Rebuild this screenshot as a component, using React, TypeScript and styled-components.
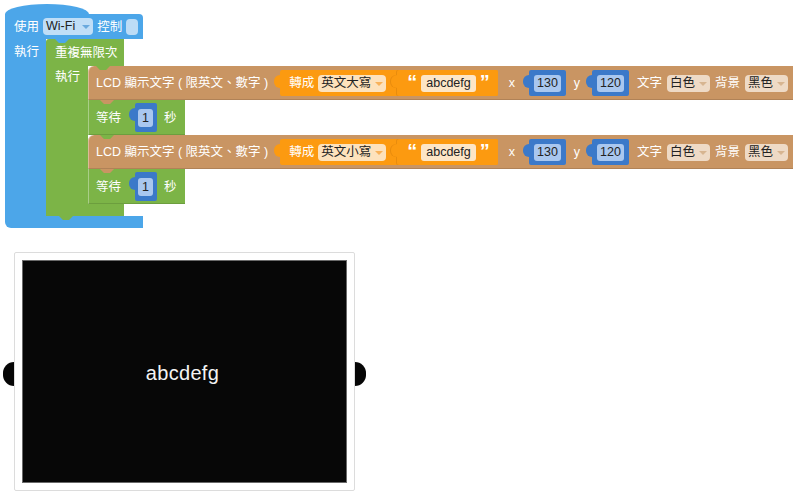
import React from "react";
import styled, { createGlobalStyle, css } from "styled-components";

const COL = {
  blue: "#4ca6e9",
  green: "#7cb447",
  brown: "#c99563",
  orange: "#fc9a10",
  num: "#3b79c9",
};

const GlobalStyle = createGlobalStyle`
  html, body { margin: 0; padding: 0; background: #fff; }
  body {
    font-family: "Liberation Sans", "Noto Sans CJK TC", sans-serif;
    font-size: 12.5px;
    color: #fff;
  }
  * { box-sizing: border-box; }
`;

const tabBelow = (color: string, left: number) => css`
  &::after {
    content: "";
    position: absolute;
    left: ${left}px;
    top: 100%;
    width: 14px;
    height: 4px;
    background: ${color};
    clip-path: polygon(0 0, 100% 0, 72% 100%, 28% 100%);
    z-index: 2;
  }
`;

const Workspace = styled.div`
  display: flex;
  flex-direction: column;
  align-items: flex-start;
  padding: 4px 0 0 3px;
`;

const CBlock = styled.div<{ $ml?: number }>`
  display: flex;
  flex-direction: column;
  align-items: flex-start;
  margin-left: ${(p) => p.$ml ?? 0}px;
`;

const Hat = styled.div<{ $color: string }>`
  width: 84px;
  height: 10px;
  background: ${(p) => p.$color};
  border-radius: 50% 50% 0 0 / 100% 100% 0 0;
`;

const CHeader = styled.div<{
  $color: string;
  $w: number;
  $h: number;
  $pl: number;
  $tab: number;
  $radius: string;
}>`
  position: relative;
  display: flex;
  align-items: center;
  gap: 4px;
  width: ${(p) => p.$w}px;
  height: ${(p) => p.$h}px;
  padding-left: ${(p) => p.$pl}px;
  background: ${(p) => p.$color};
  border-radius: ${(p) => p.$radius};
  ${(p) => tabBelow(p.$color, p.$tab)}
`;

const CBody = styled.div`
  display: flex;
  align-items: stretch;
`;

const CArm = styled.div<{ $color: string; $w: number; $pt: number; $pl: number }>`
  width: ${(p) => p.$w}px;
  background: ${(p) => p.$color};
  padding-top: ${(p) => p.$pt}px;
  padding-left: ${(p) => p.$pl}px;
`;

const Stack = styled.div`
  display: flex;
  flex-direction: column;
  align-items: flex-start;
`;

const CFoot = styled.div<{ $color: string; $w: number; $radius: string; $tab?: number }>`
  position: relative;
  width: ${(p) => p.$w}px;
  height: 12px;
  background: ${(p) => p.$color};
  border-radius: ${(p) => p.$radius};
  ${(p) => (p.$tab !== undefined ? tabBelow(p.$color, p.$tab) : "")}
`;

const Stmt = styled.div<{ $color: string; $h: number; $gap: number; $pr: number; $radius: string }>`
  position: relative;
  display: flex;
  align-items: center;
  gap: ${(p) => p.$gap}px;
  height: ${(p) => p.$h}px;
  padding: 0 ${(p) => p.$pr}px 0 8px;
  background: ${(p) => p.$color};
  border-radius: ${(p) => p.$radius};
  box-shadow: inset 0 -1px rgba(0, 0, 0, 0.12), inset 1px 0 rgba(255, 255, 255, 0.35);
  ${(p) => tabBelow(p.$color, 12)}
`;

const Label = styled.span<{ $ml?: number }>`
  white-space: nowrap;
  color: #fff;
  line-height: 14px;
  margin-left: ${(p) => p.$ml ?? 0}px;
`;

const Value = styled.div<{ $color: string; $h: number; $ml: number; $pl: number; $pr: number; $gap?: number }>`
  position: relative;
  display: flex;
  align-items: center;
  gap: ${(p) => p.$gap ?? 0}px;
  height: ${(p) => p.$h}px;
  margin-left: ${(p) => p.$ml}px;
  padding: 0 ${(p) => p.$pr}px 0 ${(p) => p.$pl}px;
  background: ${(p) => p.$color};
  border-radius: 2px;
  &::before {
    content: "";
    position: absolute;
    left: -6px;
    top: 5px;
    width: 7px;
    height: 13px;
    background: ${(p) => p.$color};
    border-radius: 6px 0 0 6px;
  }
`;

const NestedValue = styled(Value)`
  align-self: stretch;
  height: auto;
  box-shadow: -1px 0 0 rgba(120, 60, 0, 0.15);
  &::before {
    box-shadow: -1px 0 0 rgba(120, 60, 0, 0.15);
  }
`;

const Dropdown = styled.div<{ $bg: string; $arrow: string; $gap?: number }>`
  display: flex;
  align-items: center;
  height: 17px;
  padding: 0 3px 0 3px;
  background: ${(p) => p.$bg};
  border-radius: 4px;
  color: #222;
  white-space: nowrap;
  line-height: 17px;
  &::after {
    content: "";
    margin-left: ${(p) => p.$gap ?? 4}px;
    margin-top: 1px;
    border-left: 4px solid transparent;
    border-right: 4px solid transparent;
    border-top: 4px solid ${(p) => p.$arrow};
  }
`;

const Slot = styled.div`
  width: 12px;
  height: 16px;
  border-radius: 4px;
  background: #bcdcf6;
`;

const Field = styled.div<{ $bg: string; $px: number; $h: number }>`
  display: flex;
  align-items: center;
  height: ${(p) => p.$h}px;
  padding: 0 ${(p) => p.$px}px;
  background: ${(p) => p.$bg};
  border-radius: 3px;
  color: #222;
  line-height: ${(p) => p.$h}px;
  white-space: nowrap;
`;

const Quote = styled.span`
  font-family: "Liberation Sans", sans-serif;
  font-weight: bold;
  font-size: 20px;
  line-height: 20px;
  height: 20px;
  margin-top: -2px;
  color: #fff;
`;

const ScreenRow = styled.div`
  display: flex;
  align-items: center;
  margin-top: 24px;
`;

const Lobe = styled.div<{ $side: "left" | "right" }>`
  width: 11px;
  height: 24px;
  margin-top: 5px;
  background: #060606;
  border-radius: ${(p) => (p.$side === "left" ? "12px 0 0 12px" : "0 12px 12px 0")};
`;

const Panel = styled.div`
  width: 341px;
  height: 239px;
  padding: 7px;
  background: #fff;
  border: 1px solid #dcdcdc;
  border-radius: 2px;
`;

const Screen = styled.div`
  width: 100%;
  height: 100%;
  background: #070707;
  border: 1px solid #6a6a6a;
  display: flex;
  align-items: center;
  justify-content: center;
`;

const ScreenText = styled.span`
  font-family: "Liberation Sans", sans-serif;
  font-size: 20px;
  letter-spacing: 0.3px;
  color: #f4f4f4;
  margin-top: 3px;
  margin-right: 4px;
`;

function NumberBlock({ v, tall, ml }: { v: string; tall?: boolean; ml: number }) {
  return (
    <Value $color={COL.num} $h={tall ? 29 : 26} $ml={ml} $pl={tall ? 3 : 5} $pr={tall ? 4 : 5}>
      <Field $bg="#a9c7ef" $px={tall ? 4 : 3} $h={tall ? 18 : 17}>
        {v}
      </Field>
    </Value>
  );
}

function LcdBlock({ mode }: { mode: string }) {
  return (
    <Stmt $color={COL.brown} $h={34} $gap={5} $pr={5} $radius="6px 0 0 0">
      <Label>LCD 顯示文字 ( 限英文、數字 )</Label>
      <Value $color={COL.orange} $h={26} $ml={7} $pl={9} $pr={0} $gap={4}>
        <Label>轉成</Label>
        <Dropdown $bg="#fde2bc" $arrow="#f8b25a">
          {mode}
        </Dropdown>
        <NestedValue $color={COL.orange} $h={26} $ml={7} $pl={10} $pr={8} $gap={4}>
          <Quote>“</Quote>
          <Field $bg="#fde6c6" $px={5} $h={17}>
            abcdefg
          </Field>
          <Quote>”</Quote>
        </NestedValue>
      </Value>
      <Label $ml={6}>x</Label>
      <NumberBlock v="130" ml={9} />
      <Label $ml={3}>y</Label>
      <NumberBlock v="120" ml={7} />
      <Label $ml={3}>文字</Label>
      <Dropdown $bg="#eedac6" $arrow="#d7b591">
        白色
      </Dropdown>
      <Label>背景</Label>
      <Dropdown $bg="#eedac6" $arrow="#d7b591">
        黑色
      </Dropdown>
    </Stmt>
  );
}

function WaitBlock() {
  return (
    <Stmt $color={COL.green} $h={35} $gap={7} $pr={9} $radius="0">
      <Label>等待</Label>
      <NumberBlock v="1" tall ml={7} />
      <Label>秒</Label>
    </Stmt>
  );
}

export default function App() {
  return (
    <>
      <GlobalStyle />
      <Workspace>
        <CBlock $ml={2}>
          <Hat $color={COL.blue} />
          <CHeader $color={COL.blue} $w={138} $h={25} $pl={9} $tab={50} $radius="0 4px 0 0">
            <Label>使用</Label>
            <Dropdown $bg="#c0def7" $arrow="#6aa9de" $gap={7}>
              Wi-Fi
            </Dropdown>
            <Label>控制</Label>
            <Slot />
          </CHeader>
          <CBody>
            <CArm $color={COL.blue} $w={41} $pt={6} $pl={9}>
              <Label>執行</Label>
            </CArm>
            <Stack>
              <CBlock>
                <CHeader $color={COL.green} $w={78} $h={27} $pl={9} $tab={50} $radius="3px 0 0 0">
                  <Label>重複無限次</Label>
                </CHeader>
                <CBody>
                  <CArm $color={COL.green} $w={42} $pt={4} $pl={9}>
                    <Label>執行</Label>
                  </CArm>
                  <Stack>
                    <LcdBlock mode="英文大寫" />
                    <WaitBlock />
                    <LcdBlock mode="英文小寫" />
                    <WaitBlock />
                  </Stack>
                </CBody>
                <CFoot $color={COL.green} $w={78} $radius="0" $tab={13} />
              </CBlock>
            </Stack>
          </CBody>
          <CFoot $color={COL.blue} $w={138} $radius="0 0 0 6px" />
        </CBlock>
        <ScreenRow>
          <Lobe $side="left" />
          <Panel>
            <Screen>
              <ScreenText>abcdefg</ScreenText>
            </Screen>
          </Panel>
          <Lobe $side="right" />
        </ScreenRow>
      </Workspace>
    </>
  );
}
